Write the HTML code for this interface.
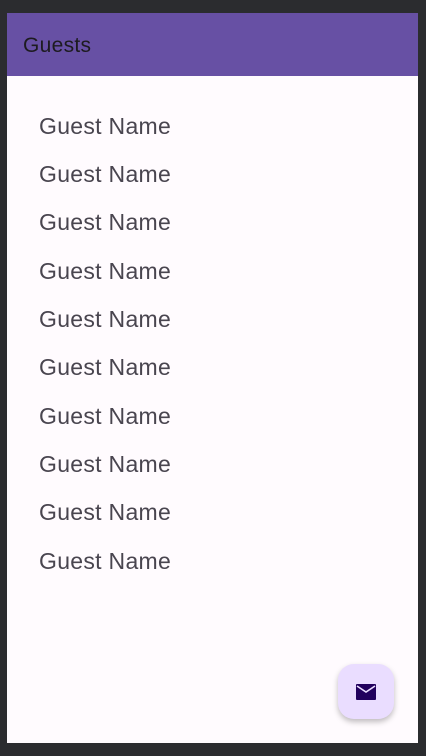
<!DOCTYPE html>
<html><head><style>
html,body{margin:0;padding:0;width:426px;height:756px;background:#2b2c2f;overflow:hidden;font-family:"Liberation Sans",sans-serif}
.screen{position:absolute;left:7px;top:13px;width:411px;height:730px;background:#fffbfe}
.bar{position:absolute;left:0;top:0;width:411px;height:63px;background:#6750a4}
.bar span{position:absolute;left:16px;top:21px;font-size:21px;letter-spacing:0.3px;color:#1d1b20}
.item{position:absolute;left:32px;font-size:23px;letter-spacing:0.3px;color:#49454f;line-height:26px}
.fab{position:absolute;left:331px;top:651px;width:56px;height:55px;border-radius:16px;background:#eaddff;box-shadow:0 3px 6px rgba(0,0,0,.25)}
</style></head><body>
<div class="screen">
<div class="bar"><span>Guests</span></div>
<div class="item" style="top:100px">Guest Name</div>
<div class="item" style="top:148px">Guest Name</div>
<div class="item" style="top:196px">Guest Name</div>
<div class="item" style="top:245px">Guest Name</div>
<div class="item" style="top:293px">Guest Name</div>
<div class="item" style="top:341px">Guest Name</div>
<div class="item" style="top:390px">Guest Name</div>
<div class="item" style="top:438px">Guest Name</div>
<div class="item" style="top:486px">Guest Name</div>
<div class="item" style="top:535px">Guest Name</div>
<div class="fab"><svg width="56" height="55" viewBox="0 0 56 55"><rect x="18" y="20" width="20" height="16" rx="1" fill="#21005d"/><path d="M19 22 L28 28 L37 22" stroke="#eaddff" stroke-width="1.6" fill="none"/></svg></div>
</div>
</body></html>
